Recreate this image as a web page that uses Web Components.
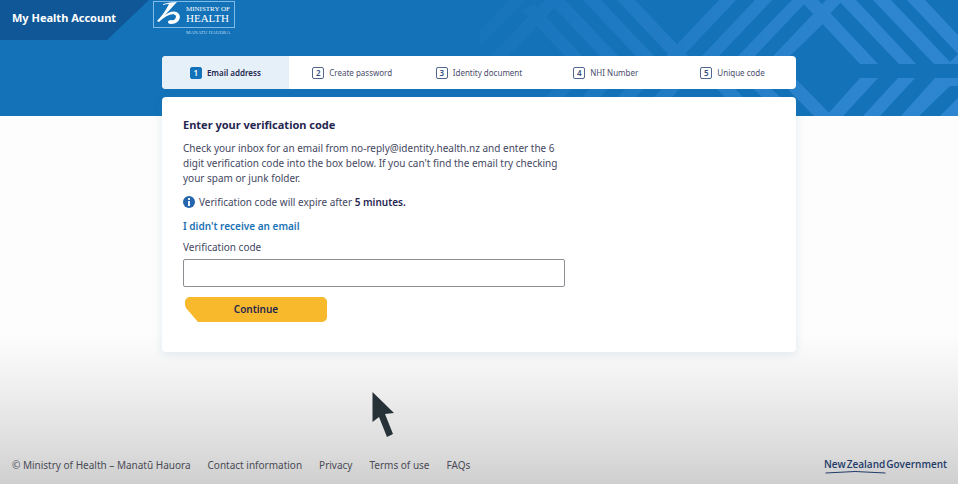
<!DOCTYPE html>
<html lang="en">
<head>
<meta charset="utf-8">
<title>My Health Account</title>
<style>
body { margin: 0; font: 10px/15px "Noto Sans", "Open Sans", sans-serif; color: #44475f; }
</style>
</head>
<body>
<health-page>
  <site-header slot="header"></site-header>
  <step-list>
    <step-item number="1" active>Email address</step-item>
    <step-item number="2">Create password</step-item>
    <step-item number="3">Identity document</step-item>
    <step-item number="4">NHI Number</step-item>
    <step-item number="5">Unique code</step-item>
  </step-list>
  <verify-card></verify-card>
  <site-footer slot="footer"></site-footer>
</health-page>
<mouse-pointer></mouse-pointer>

<script>
function define(name, html) {
  const template = document.createElement('template');
  template.innerHTML = html;
  customElements.define(name, class extends HTMLElement {
    connectedCallback() {
      if (this.shadowRoot) return;
      const root = this.attachShadow({ mode: 'open' });
      root.append(template.content.cloneNode(true));
      const number = root.querySelector('.number');
      if (number) number.textContent = this.getAttribute('number');
    }
  });
}

define('woven-banner', `
<style>
  :host { display: block; background: #1372b8; overflow: hidden; }
  svg { display: block; height: 100%; margin-left: auto; }
</style>
<svg width="478" height="116" viewBox="480 0 478 116" aria-hidden="true">
  <defs>
    <linearGradient id="fade" gradientUnits="userSpaceOnUse" x1="480" y1="0" x2="860" y2="0">
      <stop offset="0" stop-color="#3187d2" stop-opacity=".1"/>
      <stop offset=".4" stop-color="#3187d2" stop-opacity=".4"/>
      <stop offset="1" stop-color="#3187d2" stop-opacity=".9"/>
    </linearGradient>
  </defs>
  <path fill="url(#fade)" d="
    M800 0H818L878 64H860Z M838 0H856L916 64H899Z M873 0H891L952 64H934Z M907 0H925L958 35V54Z
    M860 78H878L843 116H826Z M898 78H915L880 116H863Z M935 78H958V86H950L919 116H901Z M958 98V116H940Z M948 64L958 54V64Z
    M719 0H736L683 56H666Z M755 0H772L719 56H702Z M792 0H808L755 56H738Z M826 0H843L827 17L817 10Z M816 11L827 20L790 56H773Z
    M617 0H635L688 56H670Z M583 0H601L654 56H636Z M547 0H565L618 56H600Z M522 10L534 4L582 56H565Z
    M545 0H562L508 56H490Z M510 0H526L480 46V30Z
    M777 78H795L832 116H814Z M742 78H760L780 97H762Z M706 78H724L743 97H725Z M672 78H690L672 97H654Z M636 78H654L636 97H618Z M600 78H618L600 97H582Z M564 78H582L564 97H546Z"/>
</svg>`);

define('ministry-logo', `
<style>
  :host { display: block; color: #fff; font-family: "Liberation Serif", serif; }
  .frame { display: flex; align-items: flex-start; box-sizing: border-box; width: 82px; height: 27px; border: 1px solid #7fbbe6; }
  svg { display: block; width: 32px; height: 25px; flex: none; }
  .words { display: flex; flex-direction: column; padding-top: 4px; white-space: nowrap; }
  .top { font-size: 7px; line-height: 7px; }
  .main { font-size: 11px; line-height: 11px; }
  .sub { padding-left: 33px; margin-top: 2px; font-size: 5px; line-height: 5px; color: #b5d9f2; white-space: nowrap; }
</style>
<div class="frame">
  <svg viewBox="0 0 32 25" fill="#fff" aria-hidden="true">
    <path d="M9 2Q16 0 23 0C18 5 14 10 10 14C15 9 22 8 25 12C28 17 23 22 17 22C13 22 13 18 17 18C20 19 22 17 22 14C20 10 12 13 5 20L3 19C8 14 12 8 15 2Q12 2 9 3Z"/>
  </svg>
  <div class="words"><span class="top">MINISTRY OF</span><span class="main">HEALTH</span></div>
</div>
<div class="sub">MANATŪ HAUORA</div>`);

define('site-header', `
<style>
  :host { display: flex; align-items: flex-start; gap: 4px; height: 40px; }
  .brand { display: block; box-sizing: border-box; width: 149px; height: 40px; padding: 10px 12px; background: #0f5797;
    clip-path: polygon(0 0, 100% 0, 107px 100%, 0 100%); color: #fff; font-size: 11px; line-height: 15px; font-weight: 700;
    text-decoration: none; white-space: nowrap; }
  ministry-logo { padding-top: 1px; }
</style>
<a class="brand" href="#">My Health Account</a>
<ministry-logo></ministry-logo>`);

define('health-page', `
<style>
  :host { display: flex; flex-direction: column; position: relative; min-height: 100vh;
    background: linear-gradient(to top, #cfcfcf 0, #dedede 40px, #f3f3f3 110px, #fdfdfd 150px); }
  woven-banner { position: absolute; inset: 0 0 auto 0; height: 116px; }
  header, main, footer { position: relative; }
  main { display: flex; flex-direction: column; gap: 8px; box-sizing: border-box; width: calc(100% - 32px); max-width: 634px;
    margin: 0 auto; padding-top: 16px; }
  footer { margin-top: auto; }
</style>
<woven-banner></woven-banner>
<header><slot name="header"></slot></header>
<main><slot></slot></main>
<footer><slot name="footer"></slot></footer>`);

define('step-list', `
<style>
  :host { display: flex; height: 33px; border-radius: 4px; background: #fff; overflow: hidden; }
</style>
<slot></slot>`);

define('step-item', `
<style>
  :host { display: flex; flex: 1; align-items: center; justify-content: center; gap: 5px; font-size: 8px; line-height: 12px;
    color: #4a4d6c; white-space: nowrap; }
  :host([active]) { background: #e6f0f9; color: #24264f; font-weight: 600; }
  .number { box-sizing: border-box; width: 12px; height: 12px; border: 1px solid #52668f; border-radius: 2px; color: #34507f;
    font-weight: 600; line-height: 10px; text-align: center; }
  :host([active]) .number { border-color: #1372b8; background: #1372b8; color: #fff; }
</style>
<span class="number"></span><span><slot></slot></span>`);

define('verify-card', `
<style>
  :host { display: block; padding: 20px 21px 30px; border-radius: 4px; background: #fff; box-shadow: 0 2px 10px rgba(60, 130, 160, .14); }
  h1, p, form { margin: 0; }
  h1 { font-size: 11px; line-height: 16px; font-weight: 700; color: #25264f; }
  .intro { margin-top: 8px; max-width: 382px; }
  .note { display: flex; align-items: center; gap: 4px; margin-top: 9px; }
  .note svg { width: 12px; height: 12px; margin-bottom: 2px; }
  b { font-weight: 600; color: #25264f; }
  a { display: inline-block; margin-top: 9px; color: #1b72b4; font-weight: 600; text-decoration: none; }
  label { display: block; margin-top: 6px; }
  input { display: block; box-sizing: border-box; width: 100%; max-width: 382px; height: 28px; margin-top: 4px; padding: 0 8px;
    border: 1px solid #8d8d93; border-radius: 2px; background: #fff; font: inherit; color: inherit; }
  button { display: block; box-sizing: border-box; width: 142px; height: 25px; margin: 10px 0 0 2px; padding: 0; border: 0;
    border-radius: 5px; background: #f9b92c; clip-path: polygon(0 0, 100% 0, 100% 100%, 13px 100%, 1px 11px, 0 8px);
    font: 600 10px/15px "Noto Sans", sans-serif; color: #25264f; }
</style>
<h1>Enter your verification code</h1>
<p class="intro">Check your inbox for an email from no-reply@identity.health.nz and enter the 6 digit verification code into the box below. If you can't find the email try checking your spam or junk folder.</p>
<p class="note">
  <svg viewBox="0 0 12 12" aria-hidden="true"><circle cx="6" cy="6" r="6" fill="#2565ae"/><path d="M5 5H7V10H5ZM5 2H7V4H5Z" fill="#e8f1fa"/></svg>
  <span>Verification code will expire after <b>5 minutes.</b></span>
</p>
<a href="#">I didn't receive an email</a>
<form onsubmit="return false">
  <label for="code">Verification code</label>
  <input id="code" type="text" autocomplete="one-time-code">
  <button type="submit">Continue</button>
</form>`);

define('site-footer', `
<style>
  :host { display: flex; align-items: center; justify-content: space-between; padding: 0 11px 10px 12px; color: #4a4b55; }
  nav { display: flex; gap: 17px; white-space: nowrap; }
  nav a { color: inherit; text-decoration: none; }
  .gov { display: block; color: #223a68; font: 600 10px/14px "Open Sans", sans-serif; text-decoration: none; white-space: nowrap; }
  .gov svg { display: block; width: 100%; height: 3px; }
</style>
<nav>
  <span>© Ministry of Health – Manatū Hauora</span>
  <a href="#">Contact information</a>
  <a href="#">Privacy</a>
  <a href="#">Terms of use</a>
  <a href="#">FAQs</a>
</nav>
<a class="gov" href="#">New&#8202;Zealand&#8202;Government
  <svg viewBox="0 0 122 3" aria-hidden="true"><path d="M1 2Q30 -1 61 2" fill="none" stroke="#223a68"/></svg>
</a>`);

define('mouse-pointer', `
<style>
  :host { position: absolute; left: 372px; top: 391px; pointer-events: none; }
  svg { display: block; }
</style>
<svg width="24" height="47" viewBox="0 0 24 47" aria-hidden="true"><path d="M0.500 1L22 22L13 23L21 43L15 46L7 26L0.500 31Z" fill="#263138"/></svg>`);
</script>
</body>
</html>
